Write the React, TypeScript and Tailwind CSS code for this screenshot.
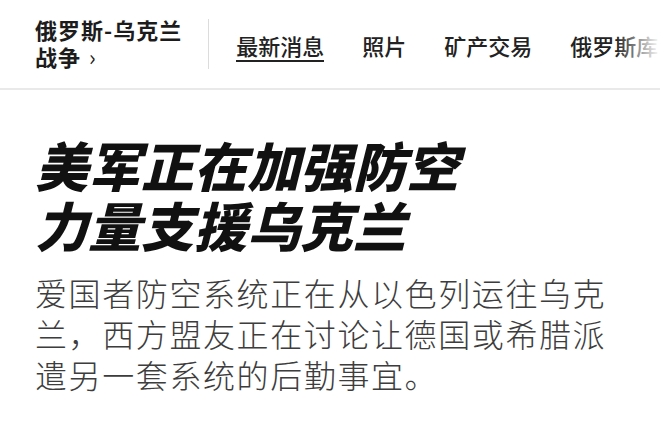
const navItems = ["最新消息", "照片", "矿产交易", "俄罗斯库"]

const cjk = "font-['Noto_Sans_CJK_SC','Noto_Sans',sans-serif]"

function TopicHeader() {
  return (
    <header className="relative h-[90px] border-b-2 border-[#e9e9e9] bg-white">
      <div className="flex h-full items-center overflow-hidden pl-[35px]">
        <a className="shrink-0 pb-[2px] text-[22px] leading-[27px] font-semibold tracking-[1px] text-[#1c1c1c]">
          俄罗斯-乌克兰
          <br />
          战争 <span className="ml-[2px] font-normal">›</span>
        </a>
        <div className="mr-[27px] ml-[26px] h-[50px] w-px shrink-0 bg-[#dcdcdc]" />
        <nav className="flex shrink-0 gap-[38px] text-[22px] leading-[30px] font-medium text-[#222]">
          {navItems.map((item, i) => (
            <span
              key={item}
              className={
                i === 0
                  ? "relative whitespace-nowrap pt-[2px] after:absolute after:right-0 after:bottom-[-2px] after:left-0 after:h-[2px] after:bg-[#222] after:content-['']"
                  : "whitespace-nowrap pt-[2px]"
              }
            >
              {item}
            </span>
          ))}
        </nav>
      </div>
      {/* fade the overflowing tabs at the right edge */}
      <div className="pointer-events-none absolute top-0 right-0 h-full w-[44px] bg-gradient-to-r from-white/0 to-white" />
    </header>
  )
}

export default function App() {
  return (
    <div className={`h-[423px] w-[660px] overflow-hidden bg-white ${cjk}`}>
      <TopicHeader />
      <main className="px-[35px]">
        <h1 className="mt-[44px] w-[450px] text-[53px] leading-[60px] font-black italic text-[#111]">
          美军正在加强防空力量支援乌克兰
        </h1>
        <p className="mt-[18px] w-[585px] text-[32px] leading-[41px] font-light tracking-[1.6px] text-[#3d3d3d]">
          爱国者防空系统正在从以色列运往乌克兰，西方盟友正在讨论让德国或希腊派遣另一套系统的后勤事宜。
        </p>
      </main>
    </div>
  )
}
